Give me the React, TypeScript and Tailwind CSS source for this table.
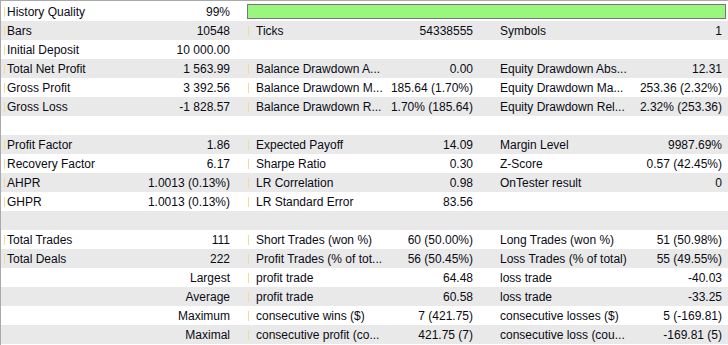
type Cell = [string, string] | null;

const rows: (Cell[] | "blank" | "quality")[] = [
  "quality",
  [["Bars", "10548"], ["Ticks", "54338555"], ["Symbols", "1"]],
  [["Initial Deposit", "10 000.00"], null, null],
  [["Total Net Profit", "1 563.99"], ["Balance Drawdown A...", "0.00"], ["Equity Drawdown Abs...", "12.31"]],
  [["Gross Profit", "3 392.56"], ["Balance Drawdown M...", "185.64 (1.70%)"], ["Equity Drawdown Ma...", "253.36 (2.32%)"]],
  [["Gross Loss", "-1 828.57"], ["Balance Drawdown R...", "1.70% (185.64)"], ["Equity Drawdown Rel...", "2.32% (253.36)"]],
  "blank",
  [["Profit Factor", "1.86"], ["Expected Payoff", "14.09"], ["Margin Level", "9987.69%"]],
  [["Recovery Factor", "6.17"], ["Sharpe Ratio", "0.30"], ["Z-Score", "0.57 (42.45%)"]],
  [["AHPR", "1.0013 (0.13%)"], ["LR Correlation", "0.98"], ["OnTester result", "0"]],
  [["GHPR", "1.0013 (0.13%)"], ["LR Standard Error", "83.56"], null],
  "blank",
  [["Total Trades", "111"], ["Short Trades (won %)", "60 (50.00%)"], ["Long Trades (won %)", "51 (50.98%)"]],
  [["Total Deals", "222"], ["Profit Trades (% of tot...", "56 (50.45%)"], ["Loss Trades (% of total)", "55 (49.55%)"]],
  [["", "Largest"], ["profit trade", "64.48"], ["loss trade", "-40.03"]],
  [["", "Average"], ["profit trade", "60.58"], ["loss trade", "-33.25"]],
  [["", "Maximum"], ["consecutive wins ($)", "7 (421.75)"], ["consecutive losses ($)", "5 (-169.81)"]],
  [["", "Maximal"], ["consecutive profit (co...", "421.75 (7)"], ["consecutive loss (cou...", "-169.81 (5)"]],
];

function Mark({ show }: { show: boolean }) {
  return <span className={"w-px h-[10px] shrink-0 " + (show ? "bg-[#efdc98]" : "bg-transparent")} />;
}

function First({ cell }: { cell: Cell }) {
  return (
    <div className="w-[242px] shrink-0 flex items-center pl-[3px] pr-[13px]">
      <Mark show={!!cell && cell[0] !== ""} />
      <span className="ml-[2px] flex-1 whitespace-nowrap">{cell ? cell[0] : ""}</span>
      <span className="whitespace-nowrap">{cell ? cell[1] : ""}</span>
    </div>
  );
}

function Second({ cell }: { cell: Cell }) {
  return (
    <div className="w-[243px] shrink-0 flex items-center pl-[5px] pr-[13px]">
      <Mark show={!!cell} />
      <span className="ml-[7px] flex-1 whitespace-nowrap">{cell ? cell[0] : ""}</span>
      <span className="whitespace-nowrap">{cell ? cell[1] : ""}</span>
    </div>
  );
}

function Third({ cell }: { cell: Cell }) {
  return (
    <div className="flex-1 flex items-center pl-[14px] pr-[6px]">
      <span className="flex-1 whitespace-nowrap">{cell ? cell[0] : ""}</span>
      <span className="whitespace-nowrap">{cell ? cell[1] : ""}</span>
    </div>
  );
}

export default function App() {
  return (
    <div
      className="w-[728px] h-[345px] overflow-hidden bg-white border-t border-l border-[#a9a9a9] pt-px text-[12px] text-[#0a0a14]"
      style={{ fontFamily: '"Liberation Sans", Arial, sans-serif' }}
    >
      {rows.map((row, i) => {
        const bg = i % 2 === 1 ? "bg-[#e9e9e9]" : "bg-white";
        if (row === "blank") return <div key={i} className={"h-[19px] " + bg} />;
        if (row === "quality")
          return (
            <div key={i} className={"h-[19px] flex " + bg}>
              <First cell={["History Quality", "99%"]} />
              <div className="flex-1 pl-[4px] pr-[2px] pt-[2px]">
                <div className="h-[15px] bg-[#99f77f] border border-[#777777]" />
              </div>
            </div>
          );
        return (
          <div key={i} className={"h-[19px] flex " + bg}>
            <First cell={row[0]} />
            <Second cell={row[1]} />
            <Third cell={row[2]} />
          </div>
        );
      })}
    </div>
  );
}
